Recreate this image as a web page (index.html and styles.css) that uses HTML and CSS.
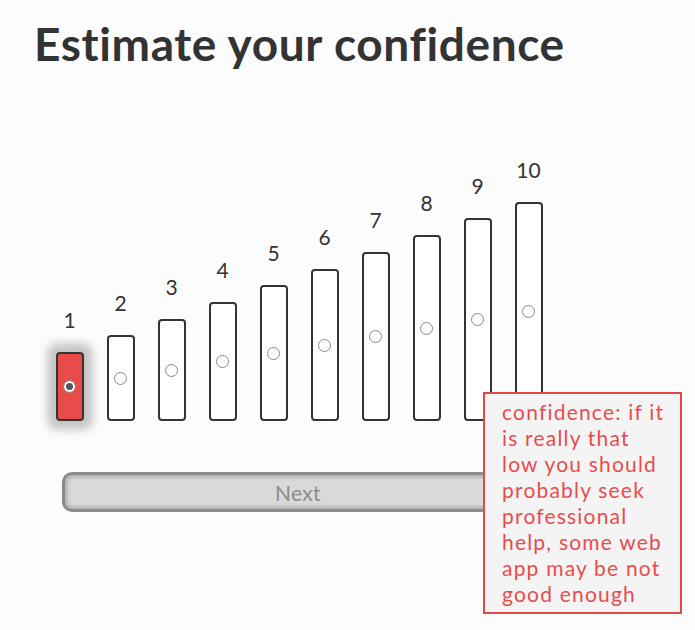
FILE: index.html
```html
<!DOCTYPE html>
<html lang="en">
<head>
<meta charset="utf-8">
<title>Estimate your confidence</title>
<link rel="stylesheet" href="styles.css">
</head>
<body>
<main class="page">
  <h1 class="title">Estimate your confidence</h1>
  <div class="scale">
    <label class="step"><span class="num">1</span><span class="bar selected" style="height:69px"><span class="radio checked"></span></span></label>
    <label class="step"><span class="num">2</span><span class="bar" style="height:86px"><span class="radio"></span></span></label>
    <label class="step"><span class="num">3</span><span class="bar" style="height:102px"><span class="radio"></span></span></label>
    <label class="step"><span class="num">4</span><span class="bar" style="height:119px"><span class="radio"></span></span></label>
    <label class="step"><span class="num">5</span><span class="bar" style="height:136px"><span class="radio"></span></span></label>
    <label class="step"><span class="num">6</span><span class="bar" style="height:152px"><span class="radio"></span></span></label>
    <label class="step"><span class="num">7</span><span class="bar" style="height:169px"><span class="radio"></span></span></label>
    <label class="step"><span class="num">8</span><span class="bar" style="height:186px"><span class="radio"></span></span></label>
    <label class="step"><span class="num">9</span><span class="bar" style="height:203px"><span class="radio"></span></span></label>
    <label class="step"><span class="num">10</span><span class="bar" style="height:219px"><span class="radio"></span></span></label>
  </div>
  <button class="next" type="button">Next</button>
  <div class="tooltip">confidence: if it<br>is really that<br>low you should<br>probably seek<br>professional<br>help, some web<br>app may be not<br>good enough</div>
</main>
</body>
</html>
```
FILE: styles.css
```css
html, body {
  margin: 0;
  padding: 0;
  background: #fcfcfc;
}
body {
  font-family: Lato, "Open Sans", sans-serif;
  color: #333;
}
.page {
  position: relative;
  width: 695px;
  height: 630px;
  overflow: hidden;
}
.title {
  margin: 0;
  padding: 17px 0 0 34px;
  font-size: 46px;
  line-height: 53px;
  letter-spacing: 0.6px;
  font-weight: bold;
  color: #333;
}
.scale {
  display: flex;
  align-items: flex-end;
  height: 351px;
  margin-left: 44px;
}
.step {
  display: flex;
  flex-direction: column;
  align-items: center;
  width: 51px;
}
.num {
  font-size: 21px;
  line-height: 24px;
  margin-bottom: 20px;
  color: #333;
}
.bar {
  box-sizing: border-box;
  width: 28px;
  border: 2px solid #333;
  border-radius: 4px;
  background: #fff;
  display: flex;
  align-items: center;
  justify-content: center;
}
.bar.selected {
  background: #e94a4a;
  box-shadow: 0 0 9px 9px #c6c6c6;
}
.radio {
  box-sizing: border-box;
  width: 13px;
  height: 13px;
  border: 1px solid #888;
  border-radius: 50%;
  background: #fff;
}
.radio.checked {
  background: #555;
  box-shadow: inset 0 0 0 2px #fff;
  border-color: #999;
}
.next {
  display: block;
  box-sizing: border-box;
  margin: 51px 0 0 62px;
  width: 472px;
  height: 40px;
  border: 3px solid #8a8a8a;
  border-radius: 10px;
  background: #d9d9d9;
  box-shadow: inset 0 0 4px 2px rgba(0, 0, 0, 0.22);
  font-family: Lato, "Open Sans", sans-serif;
  font-size: 21px;
  letter-spacing: 0.3px;
  color: #8c8c8c;
  padding: 0;
}
.tooltip {
  position: absolute;
  left: 483px;
  top: 392px;
  width: 199px;
  height: 222px;
  box-sizing: border-box;
  border: 2px solid #e24848;
  background: #f4f4f4;
  color: #e84c4c;
  font-size: 21px;
  line-height: 26px;
  letter-spacing: 1.2px;
  padding: 5px 0 0 17px;
}
```
